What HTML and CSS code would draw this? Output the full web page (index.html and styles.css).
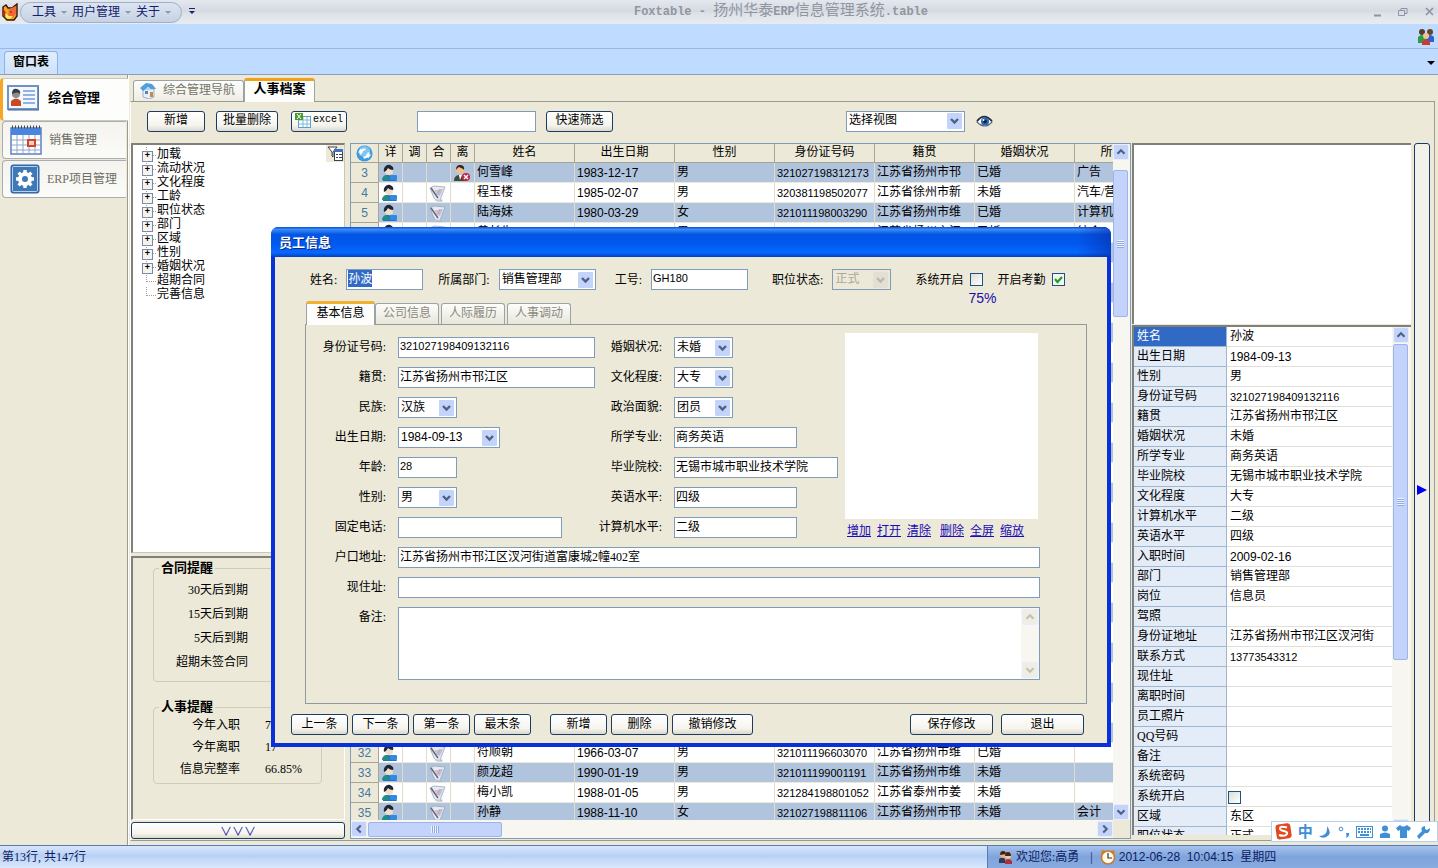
FILE: index.html
```html
<!DOCTYPE html>
<html lang="zh-CN">
<head>
  <meta charset="UTF-8">
  <title>Foxtable - 扬州华泰ERP信息管理系统.table</title>
  <link rel="stylesheet" href="styles.css">
</head>
<body>

  <!-- 图标 -->
  <svg class="defs" width="0" height="0" aria-hidden="true">
    <symbol id="i-person" viewBox="0 0 18 18">
      <path d="M2 17c-1-4 2-6 5-6l6 1 3 5z" fill="#2a6fc4"/>
      <path d="M1 16c0-3 2-5 5-5l3 5z" fill="#1d8f86"/>
      <rect x="9" y="11" width="7" height="5" rx="1" fill="#2f8be0"/>
      <circle cx="8" cy="7" r="4" fill="#f6dcc4"/>
      <path d="M3 8c-1-5 3-8 6-7 3 1 4 3 3 5-2 0-4-1-5-2-1 2-2 3-4 4z" fill="#1c2836"/>
    </symbol>
    <symbol id="i-leave" viewBox="0 0 18 18">
      <path d="M1 17c0-5 3-6 6-6s6 1 6 6z" fill="#3d4a3c"/>
      <path d="M6 11l1 5 2-5z" fill="#fff"/>
      <circle cx="7" cy="6" r="4" fill="#f0bf90"/>
      <path d="M3 6c0-4 2-5 4-5s5 1 4 5c-1-2-4-2-5-3-1 1-2 1-3 3z" fill="#3a2418"/>
      <circle cx="13" cy="13" r="4" fill="#c8203c"/>
      <path d="M11 11l4 4M15 11l-4 4" stroke="#fff" stroke-width="1.4"/>
    </symbol>
    <symbol id="i-contract" viewBox="0 0 18 18">
      <path d="M1 4l4-2 11 1-3 8-2 5 2 1H8l-3-3z" fill="#e6eaf2" stroke="#9aa5ba" stroke-width=".8"/>
      <path d="M10 5l4 0-3 7-3-1z" fill="#b9c2d4"/>
      <path d="M6 7h5M7 9h3" stroke="#d98f96"/>
      <path d="M2 4l7 10" stroke="#5a6478" stroke-width="1.4"/>
      <path d="M6 16h8" stroke="#c2c9d8"/>
    </symbol>
    <symbol id="i-up" viewBox="0 0 16 16"><path d="M4 10l4-4 4 4" fill="none" stroke="currentColor" stroke-width="2.4"/></symbol>
    <symbol id="i-down" viewBox="0 0 16 16"><path d="M4 6l4 4 4-4" fill="none" stroke="currentColor" stroke-width="2.4"/></symbol>
    <symbol id="i-left" viewBox="0 0 16 16"><path d="M10 4L6 8l4 4" fill="none" stroke="currentColor" stroke-width="2.4"/></symbol>
    <symbol id="i-right" viewBox="0 0 16 16"><path d="M6 4l4 4-4 4" fill="none" stroke="currentColor" stroke-width="2.4"/></symbol>
  </svg>

  <!-- 标题栏 -->
  <header class="titlebar">
    <svg class="fox" width="17" height="18" viewBox="0 0 17 18">
      <path d="M2 4l3-2 2 3 4 0 5-4v12l-3 4H6l-4-4z" fill="#f6a81c" stroke="#3a1208" stroke-width="1.4"/>
      <path d="M8 6l7-3v8l-3 4-5-2z" fill="#ee6a3a"/>
      <path d="M2 5l3 5-1 4-2-2z" fill="#b32a10"/>
      <path d="M4 10l4 3 4 0-3 3-4-1z" fill="#ffe95c"/>
      <path d="M9 9l2 0" stroke="#7a1c05"/>
    </svg>
    <nav class="quick">
      <a href="#">工具</a><i></i>
      <a href="#">用户管理</a><i></i>
      <a href="#">关于</a><i></i>
    </nav>
    <span class="more"></span>
    <h1>Foxtable - <b>扬州华泰</b>ERP<b>信息管理系统</b>.table</h1>
    <svg class="win-buttons" width="62" height="12" viewBox="0 0 62 12" fill="none" stroke="#8a94a6">
      <path d="M1 9.500h7" stroke-width="2"/>
      <path d="M25.500 4.500h6v5h-6zM28 4V2.500h6v5h-2"/>
      <path d="M53 2l7 7M60 2l-7 7" stroke-width="1.600"/>
    </svg>
  </header>
  <div class="ribbon">
    <svg width="18" height="17" viewBox="0 0 18 17">
      <circle cx="5" cy="4" r="3" fill="#5a3a22"/><path d="M1 15V9q4-4 8 0v6z" fill="#2f9a44"/>
      <circle cx="13" cy="4" r="3" fill="#6b4426"/><path d="M9 14V9q4-4 8 0v5z" fill="#2f62c8"/>
      <circle cx="9" cy="8" r="3" fill="#eec39a"/><path d="M5 17v-3q4-5 8 0v3z" fill="#cf3a30"/>
    </svg>
  </div>
  <div class="window-tabs">
    <button type="button" class="window-tab">窗口表</button>
    <span class="tab-arrow"></span>
  </div>

  <main>
    <!-- 左侧导航 -->
    <nav class="sidebar">
      <button type="button" class="side-item active">
        <svg width="32" height="26" viewBox="0 0 32 26">
          <rect x="1" y="1" width="30" height="23" fill="#f4f8fd" stroke="#6f93c4" stroke-width="2"/>
          <path d="M1 25h31V2" fill="none" stroke="#3f6298"/>
          <path d="M16 6h12M16 10h12M16 14h12M16 18h12" stroke="#8fb4e2" stroke-width="2"/>
          <path d="M4 21v-5q5-5 10 0v5z" fill="#c94a1c"/>
          <circle cx="9" cy="9" r="4" fill="#8d8d90"/><path d="M5 9q0-6 5-5 4 1 3 5-2-3-8 0z" fill="#3c3c40"/>
        </svg>
        综合管理
      </button>
      <button type="button" class="side-item">
        <svg width="32" height="30" viewBox="0 0 32 30">
          <rect x="1" y="3" width="30" height="26" fill="#fff" stroke="#5c7fc0" stroke-width="1.500"/>
          <rect x="1" y="3" width="30" height="7" fill="#4a86dd"/>
          <path d="M2 2h28" stroke="#444" stroke-dasharray="1 2" stroke-width="3"/>
          <path d="M2 15h28M2 20h28M2 25h28M7 10v18M13 10v18M19 10v18M25 10v18" stroke="#8fa6ce"/>
          <rect x="18" y="15" width="7" height="6" fill="#f8d3c8" stroke="#d6432a" stroke-width="2"/>
        </svg>
        销售管理
      </button>
      <button type="button" class="side-item">
        <svg width="30" height="30" viewBox="0 0 30 30">
          <rect x="1" y="1" width="28" height="28" rx="2" fill="#3d78b8" stroke="#2f5f98"/>
          <rect x="2.500" y="2.500" width="25" height="25" rx="1" fill="none" stroke="#b8d2ee"/>
          <circle cx="15" cy="15" r="5" fill="none" stroke="#fff" stroke-width="4"/>
          <path d="M15 6v4M15 20v4M6 15h4M20 15h4M8.600 8.600l3 3M18.400 18.400l3 3M21.400 8.600l-3 3M8.600 21.400l3-3" stroke="#fff" stroke-width="3.400"/>
        </svg>
        ERP项目管理
      </button>
    </nav>

    <section class="content">
      <div class="page-tabs">
        <button type="button" class="page-tab">
          <svg width="17" height="17" viewBox="0 0 17 17">
            <path d="M3 7h11v8l-5 2-6-2z" fill="#e9eef5" stroke="#9db2cc"/>
            <path d="M0 6l6-5 6 1 4 5-5 0-3-2-5 4z" fill="#4aa0e0"/>
            <rect x="10" y="10" width="3" height="5" fill="#c58a50"/><rect x="5" y="9" width="3" height="3" fill="#4a88d0"/>
          </svg>
          综合管理导航
        </button>
        <button type="button" class="page-tab active">人事档案</button>
      </div>

      <div class="page">
        <!-- 工具栏 -->
        <div class="toolbar">
          <button type="button" class="btn w58">新增</button>
          <button type="button" class="btn w62">批量删除</button>
          <button type="button" class="btn w56">
            <svg width="16" height="15" viewBox="0 0 16 15">
              <rect x="3.500" y="3.500" width="12" height="11" fill="#fff" stroke="#58a0c8"/>
              <path d="M4 7h11M4 11h11M8 4v10M12 4v10" stroke="#7fbad8"/>
              <rect width="8" height="7" fill="#4a9a30"/><path d="M2 1l4 5M6 1L2 6" stroke="#fff"/>
            </svg>
            <span class="mono">excel</span>
          </button>
          <input type="text" class="filter" aria-label="筛选">
          <button type="button" class="btn w67">快速筛选</button>
          <select class="view" aria-label="选择视图"><option>选择视图</option></select>
          <svg class="eye" width="17" height="13" viewBox="0 0 17 13">
            <path d="M1 7q7-10 15 0-7 8-15 0z" fill="#fff" stroke="#5c6c80" stroke-width="1.200"/>
            <circle cx="9" cy="6.500" r="4" fill="#2c62ae"/><circle cx="9" cy="6.500" r="1.800" fill="#0c1c3c"/><circle cx="7.500" cy="5" r="1" fill="#fff"/>
            <path d="M1 6q7-9 15 0" fill="none" stroke="#222c3a" stroke-width="1.600"/>
          </svg>
        </div>

        <div class="work">
          <!-- 筛选树与提醒 -->
          <div class="left-col">
            <div class="tree-box">
              <ul class="tree" id="tree"></ul>
              <svg class="tree-filter" width="18" height="17" viewBox="0 0 18 17">
                <rect width="18" height="17" fill="#ece9d8"/>
                <path d="M2 2h9L7 7v5L6 11V7z" fill="#fff" stroke="#444"/>
                <rect x="8.500" y="4.500" width="8" height="11" fill="#fff" stroke="#345"/><path d="M8 4h9v3H8z" fill="#3a70c8"/>
                <path d="M10 9.500h2M13 9.500h3M10 12.500h2M13 12.500h3" stroke="#345"/>
              </svg>
            </div>
            <div class="notice">
              <fieldset class="contract">
                <legend>合同提醒</legend>
                <p><span>30天后到期</span></p>
                <p><span>15天后到期</span></p>
                <p><span>5天后到期</span></p>
                <p><span>超期未签合同</span></p>
              </fieldset>
              <fieldset class="staff">
                <legend>人事提醒</legend>
                <p><span>今年入职</span><b>77</b></p>
                <p><span>今年离职</span><b>17</b></p>
                <p><span>信息完整率</span><b>66.85%</b></p>
              </fieldset>
            </div>
            <button type="button" class="btn fold">∨∨∨</button>
          </div>

          <!-- 人员列表 -->
          <div class="grid">
            <div class="grid-view">
              <table class="staff-table">
                <colgroup>
                  <col class="c-no"><col class="c-ico"><col class="c-ico"><col class="c-ico"><col class="c-ico">
                  <col><col><col><col><col><col><col>
                </colgroup>
                <thead>
                  <tr>
                    <th class="refresh">
                      <svg width="17" height="17" viewBox="0 0 18 18">
                        <circle cx="9" cy="9" r="8.500" fill="#3f9be0"/><circle cx="9" cy="7" r="6" fill="#7cc4f2"/>
                        <path d="M5 10a4 4 0 0 1 5-5M13 8a4 4 0 0 1-5 5" fill="none" stroke="#fff" stroke-width="2.200"/>
                        <path d="M2 8h6l-3-4zM16 10h-6l3 4z" fill="#fff"/>
                      </svg>
                    </th>
                    <th>详</th><th>调</th><th>合</th><th>离</th>
                    <th>姓名</th><th>出生日期</th><th>性别</th><th>身份证号码</th><th>籍贯</th><th>婚姻状况</th><th>所学专业</th>
                  </tr>
                </thead>
                <tbody id="staffRows"></tbody>
              </table>
            </div>
            <div class="scroll-v">
              <span class="sb-btn"><svg><use href="#i-up"/></svg></span>
              <span class="thumb grid-thumb"></span>
              <span class="sb-btn end"><svg><use href="#i-down"/></svg></span>
            </div>
            <div class="scroll-h">
              <span class="sb-btn"><svg><use href="#i-left"/></svg></span>
              <span class="thumb"></span>
              <span class="sb-btn end"><svg><use href="#i-right"/></svg></span>
            </div>
          </div>

          <!-- 右侧明细 -->
          <div class="right-col">
            <div class="blank"></div>
            <div class="detail">
              <div class="detail-view">
                <table class="detail-table"><tbody id="detailRows"></tbody></table>
              </div>
              <div class="scroll-v">
                <span class="sb-btn"><svg><use href="#i-up"/></svg></span>
                <span class="thumb detail-thumb"></span>
                <span class="sb-btn end"><svg><use href="#i-down"/></svg></span>
              </div>
            </div>
          </div>
          <button type="button" class="strip" aria-label="展开"><i></i></button>
        </div>
      </div>
    </section>
  </main>

  <!-- 状态栏 -->
  <footer class="status">
    <span class="rows">第13行, 共147行</span>
    <div class="user">
      <svg width="14" height="14" viewBox="0 0 14 14">
        <path d="M0 13V9q3-3 6 0v4z" fill="#2d3a58"/><circle cx="4" cy="5" r="3" fill="#e8b084"/><path d="M1 5q0-4 3-4t3 3z" fill="#3c2010"/>
        <path d="M6 14v-3q3-4 7 0v3z" fill="#b03038"/><circle cx="9" cy="6" r="3" fill="#f0c8a0"/><path d="M6 6q0-4 3-4t3 4z" fill="#50200c"/>
      </svg>
      <span>欢迎您:高勇</span>
      <span class="sep">|</span>
      <svg width="16" height="16" viewBox="0 0 16 16">
        <circle cx="3" cy="3" r="2" fill="#d8862c"/><circle cx="13" cy="3" r="2" fill="#d8862c"/>
        <circle cx="8" cy="8.500" r="6.500" fill="#fffbe8" stroke="#c87a28" stroke-width="1.600"/>
        <path d="M8 4v5h4" fill="none" stroke="#333" stroke-width="1.200"/>
      </svg>
      <span class="date">2012-06-28 &nbsp;10:04:15 &nbsp;星期四</span>
    </div>
  </footer>

  <!-- 员工信息窗口 -->
  <div class="dialog" role="dialog" aria-labelledby="dlgTitle">
    <h2 id="dlgTitle">员工信息</h2>
    <form>
      <div class="head-row">
        <label for="name">姓名:</label>
        <input type="text" id="name" class="name" value="孙波">
        <label for="dept">所属部门:</label>
        <select id="dept" class="dept"><option>销售管理部</option></select>
        <label for="no">工号:</label>
        <input type="text" id="no" class="num no" value="GH180">
        <label for="state">职位状态:</label>
        <select id="state" class="w59" disabled><option>正式</option></select>
        <div class="checks">
          <label for="sysOn">系统开启</label><input type="checkbox" id="sysOn">
          <label for="attOn">开启考勤</label><input type="checkbox" id="attOn" checked>
          <span class="percent">75%</span>
        </div>
      </div>

      <div class="form-tabs">
        <button type="button" class="form-tab active">基本信息</button>
        <button type="button" class="form-tab">公司信息</button>
        <button type="button" class="form-tab">人际履历</button>
        <button type="button" class="form-tab">人事调动</button>
      </div>

      <div class="fields">
        <label for="f1">身份证号码:</label><input type="text" id="f1" class="num w197" value="321027198409132116">
        <label for="f2">婚姻状况:</label><select id="f2" class="w59"><option>未婚</option></select>
        <div class="photo-box">
          <div class="photo"></div>
          <div class="photo-links">
            <a href="#">增加</a><a href="#">打开</a><a href="#">清除</a>
            <a href="#" class="del">删除</a><a href="#">全屏</a><a href="#">缩放</a>
          </div>
        </div>
        <label for="f3">籍贯:</label><input type="text" id="f3" class="w197" value="江苏省扬州市邗江区">
        <label for="f4">文化程度:</label><select id="f4" class="w59"><option>大专</option></select>
        <label for="f5">民族:</label><select id="f5" class="w59"><option>汉族</option></select>
        <label for="f6">政治面貌:</label><select id="f6" class="w59"><option>团员</option></select>
        <label for="f7">出生日期:</label><select id="f7" class="date w102"><option>1984-09-13</option></select>
        <label for="f8">所学专业:</label><input type="text" id="f8" class="w123" value="商务英语">
        <label for="f9">年龄:</label><input type="text" id="f9" class="num w59" value="28">
        <label for="f10">毕业院校:</label><input type="text" id="f10" class="w164" value="无锡市城市职业技术学院">
        <label for="f11">性别:</label><select id="f11" class="w59"><option>男</option></select>
        <label for="f12">英语水平:</label><input type="text" id="f12" class="w123" value="四级">
        <label for="f13">固定电话:</label><input type="text" id="f13" class="w164">
        <label for="f14">计算机水平:</label><input type="text" id="f14" class="w123" value="二级">
        <label for="f15">户口地址:</label><input type="text" id="f15" class="wide" value="江苏省扬州市邗江区汊河街道富康城2幢402室">
        <label for="f16">现住址:</label><input type="text" id="f16" class="wide">
        <label for="f17">备注:</label>
        <div class="memo wide">
          <textarea id="f17"></textarea>
          <div class="scroll-v off">
            <span class="sb-btn"><svg><use href="#i-up"/></svg></span>
            <span class="sb-btn end"><svg><use href="#i-down"/></svg></span>
          </div>
        </div>
      </div>

      <div class="actions">
        <button type="button" class="btn w57">上一条</button>
        <button type="button" class="btn w57">下一条</button>
        <button type="button" class="btn w57">第一条</button>
        <button type="button" class="btn w57">最末条</button>
        <button type="button" class="btn w57 split">新增</button>
        <button type="button" class="btn w57">删除</button>
        <button type="button" class="btn w81">撤销修改</button>
        <button type="button" class="btn w83 push">保存修改</button>
        <button type="button" class="btn w83">退出</button>
      </div>
    </form>
  </div>

  <!-- 输入法工具条 -->
  <div class="ime">
    <svg width="17" height="17" viewBox="0 0 17 17">
      <rect x="1" y="1" width="15" height="15" rx="3" fill="#e04a20" transform="rotate(-8 8 8)"/>
      <path d="M12 4.500q-7-2-7 1 0 2 4 2.500 4 1 3 3-2 3-8 1" fill="none" stroke="#fff" stroke-width="2"/>
    </svg>
    <span>中</span>
    <svg width="14" height="14" viewBox="0 0 14 14"><path d="M9 1q6 8-1 11-4 2-7-1 9 0 8-10z"/></svg>
    <svg width="12" height="14" viewBox="0 0 12 14"><circle cx="3" cy="4" r="1.800" fill="none" stroke="#3f8fd6"/><path d="M8 8h3q1 3-3 5 1-2 0-5z"/></svg>
    <svg width="17" height="12" viewBox="0 0 17 12"><rect x=".5" y=".5" width="16" height="11" fill="none" stroke="#3f8fd6"/><path d="M2 3h13M2 6h13" stroke="#3f8fd6" stroke-width="2" stroke-dasharray="2 1"/><path d="M4 9h9" stroke="#3f8fd6" stroke-width="2"/></svg>
    <svg width="12" height="14" viewBox="0 0 12 14"><circle cx="6" cy="3.500" r="3"/><path d="M1 13V9q5-3 10 0v4z"/></svg>
    <svg width="15" height="13" viewBox="0 0 15 13"><path d="M4 0q3 3 7 0l4 3-2 3-2-1v8H4V5L2 6 0 3z"/></svg>
    <svg width="14" height="14" viewBox="0 0 14 14"><path d="M13 3l-3 2-2-1V1q-5 1-3 5l-5 5 2 3 6-6q5 1 5-5z"/></svg>
  </div>

  <script>
    // 树节点,最后两个没有子节点
    const nodes = ['加载', '流动状况', '文化程度', '工龄', '职位状态', '部门', '区域', '性别', '婚姻状况', '超期合同', '完善信息'];
    document.getElementById('tree').innerHTML = nodes.map((n, i) =>
      `<li class="${i < 9 ? 'has-child' : ''}">${n}</li>`).join('');

    // 行号: [姓名, 出生日期, 性别, 身份证号码, 籍贯, 婚姻状况, 所学专业]
    const staff = {
      3: ['何雪峰', '1983-12-17', '男', '321027198312173', '江苏省扬州市邗', '已婚', '广告'],
      4: ['程玉楼', '1985-02-07', '男', '320381198502077', '江苏省徐州市新', '未婚', '汽车/营销'],
      5: ['陆海妹', '1980-03-29', '女', '321011198003290', '江苏省扬州市维', '已婚', '计算机'],
      6: ['黄长生', '', '男', '', '江苏省扬州市江', '已婚', '纺合'],
      32: ['符顺朝', '1966-03-07', '男', '321011196603070', '江苏省扬州市维', '已婚', ''],
      33: ['颜龙超', '1990-01-19', '男', '321011199001191', '江苏省扬州市维', '未婚', ''],
      34: ['梅小凯', '1988-01-05', '男', '321284198801052', '江苏省泰州市姜', '未婚', ''],
      35: ['孙静', '1988-11-10', '女', '321027198811106', '江苏省扬州市邗', '未婚', '会计']
    };
    const icon = id => `<svg width="18" height="18"><use href="#${id}"/></svg>`;

    let html = '';
    for (let no = 3; no <= 35; no++) {
      const r = staff[no] || ['', '', '', '', '', '', ''];
      html += `<tr>
        <th>${staff[no] ? no : ''}</th>
        <td class="ico">${icon('i-person')}</td>
        <td></td>
        <td class="ico">${no > 3 ? icon('i-contract') : ''}</td>
        <td class="ico">${no === 3 ? icon('i-leave') : ''}</td>
        <td>${r[0]}</td><td class="date">${r[1]}</td><td>${r[2]}</td><td class="num">${r[3]}</td>
        <td>${r[4]}</td><td>${r[5]}</td><td>${r[6]}</td>
      </tr>`;
    }
    document.getElementById('staffRows').innerHTML = html;

    // 明细: [字段, 值, 样式]
    const detail = [
      ['姓名', '孙波'], ['出生日期', '1984-09-13', 'date'], ['性别', '男'],
      ['身份证号码', '321027198409132116', 'num'], ['籍贯', '江苏省扬州市邗江区'],
      ['婚姻状况', '未婚'], ['所学专业', '商务英语'], ['毕业院校', '无锡市城市职业技术学院'],
      ['文化程度', '大专'], ['计算机水平', '二级'], ['英语水平', '四级'],
      ['入职时间', '2009-02-16', 'date'], ['部门', '销售管理部'], ['岗位', '信息员'],
      ['驾照', ''], ['身份证地址', '江苏省扬州市邗江区汊河街'], ['联系方式', '13773543312', 'num'],
      ['现住址', ''], ['离职时间', ''], ['员工照片', ''], ['QQ号码', ''], ['备注', ''],
      ['系统密码', ''], ['系统开启', '<input type="checkbox" aria-label="系统开启">'],
      ['区域', '东区'], ['职位状态', '正式']
    ];
    document.getElementById('detailRows').innerHTML = detail.map(d =>
      `<tr><th>${d[0]}</th><td class="${d[2] || ''}">${d[1]}</td></tr>`).join('');

    // 打开窗口时选中姓名
    document.getElementById('name').select();
  </script>
</body>
</html>
```
FILE: styles.css
```css
/* 全局 */
* {
  box-sizing: border-box;
}

body {
  margin: 0;
  height: 100vh;
  display: flex;
  flex-direction: column;
  position: relative;
  overflow: hidden;
  background: #ece9d8;
  color: #000;
  font: 12px/14px "Liberation Serif", "Noto Sans CJK SC", serif;
}

button, input, select, textarea {
  font: inherit;
  color: inherit;
  margin: 0;
}

h1, h2, p, ul, fieldset {
  margin: 0;
  padding: 0;
}

svg {
  display: block;
  flex: none;
}

.defs {
  position: absolute;
}

/* 标题栏 */
.titlebar {
  flex: none;
  height: 24px;
  display: flex;
  align-items: center;
  position: relative;
  background: linear-gradient(#e4e8ee, #d5dae2 45%, #dfe3e8 60%, #e9ecee);
}

.fox {
  margin: 0 2px 0 1px;
}

.quick {
  display: flex;
  align-items: center;
  width: 162px;
  height: 21px;
  padding-left: 11px;
  border: 1px solid #9db0cc;
  border-radius: 11px;
  background: linear-gradient(#dce4f0, #c6d2e4);
}

.quick a {
  color: #15216b;
  text-decoration: none;
}

.quick i, .more, .tab-arrow {
  border: 3px solid transparent;
  border-top-color: #8a98b4;
  border-bottom: 0;
}

.quick i {
  margin: 0 5px;
}

.more {
  position: relative;
  margin-left: 7px;
  border-top-color: #15216b;
}

.more::before {
  content: "";
  position: absolute;
  left: -3px;
  top: -6px;
  width: 6px;
  height: 1px;
  background: #15216b;
}

.titlebar h1 {
  position: absolute;
  left: 0;
  right: 0;
  text-align: center;
  padding-left: 124px;
  color: #9095a0;
  font: bold 12px/22px "Liberation Mono", "Noto Sans CJK SC", monospace;
}

.titlebar h1 b {
  font-size: 15px;
  font-weight: normal;
}

.win-buttons {
  margin-left: auto;
  margin-right: 3px;
}

.ribbon {
  flex: none;
  height: 25px;
  display: flex;
  align-items: center;
  justify-content: flex-end;
  padding-right: 3px;
  background: #bfdbff;
  border-bottom: 1px solid #9bb9e0;
}

.window-tabs {
  flex: none;
  height: 26px;
  display: flex;
  align-items: flex-end;
  justify-content: space-between;
  padding: 0 3px 0 4px;
  background: #bfdbff;
  border-bottom: 1px solid #8a9fc0;
}

.window-tab {
  width: 54px;
  height: 23px;
  padding: 0 0 3px;
  border: 1px solid #8db2e3;
  border-bottom: 0;
  border-radius: 4px 4px 0 0;
  background: linear-gradient(#e2eefc, #cfe1f8);
  font-weight: bold;
}

.tab-arrow {
  border-width: 4px 4px 0;
  margin-bottom: 9px;
  border-top-color: #000;
}

/* 主体 */
main {
  flex: 1;
  min-height: 0;
  display: flex;
}

.sidebar {
  flex: none;
  width: 128px;
  padding-top: 3px;
  border-right: 1px solid #9c9a8c;
}

.side-item {
  display: flex;
  align-items: center;
  gap: 7px;
  width: 124px;
  height: 38px;
  margin: 0 0 1px 2px;
  padding: 0 0 0 7px;
  border: 1px solid #a8aeb4;
  border-right: 0;
  border-radius: 4px 0 0 4px;
  background: linear-gradient(#f4f3ee, #fbfbf8);
  color: #6e6e66;
}

.side-item.active {
  gap: 9px;
  width: 128px;
  height: 43px;
  margin: 0;
  padding: 0 0 3px 4px;
  border-color: #c8c8c0;
  border-left: 3px solid #f5a623;
  background: #fdfdfc;
  color: #000;
  font-weight: bold;
  font-size: 13px;
}

.content {
  flex: 1;
  min-width: 0;
  display: flex;
  flex-direction: column;
  padding: 3px 3px 4px 1px;
  border-left: 1px solid #fff;
}

.page-tabs {
  flex: none;
  height: 23px;
  display: flex;
  align-items: flex-end;
  padding-left: 3px;
}

.page-tab {
  display: flex;
  align-items: center;
  gap: 6px;
  width: 111px;
  height: 21px;
  padding: 0 0 2px 6px;
  border: 1px solid #9aa4a8;
  border-bottom: 0;
  border-radius: 3px 3px 0 0;
  background: linear-gradient(#fdfdfb, #efede2);
  color: #75756c;
}

.page-tab.active {
  justify-content: center;
  width: 71px;
  height: 24px;
  margin-bottom: -1px;
  padding: 0 0 5px;
  border-top: 3px solid #f0a020;
  background: #fdfdfb;
  color: #000;
  font-weight: bold;
  font-size: 13px;
  z-index: 1;
}

.page {
  flex: 1;
  min-height: 0;
  display: flex;
  flex-direction: column;
  padding: 0 4px 1px 0;
  border: 1px solid #9a9c90;
  border-left-color: #fff;
}

.toolbar {
  flex: none;
  height: 41px;
  display: flex;
  align-items: center;
  padding: 0 0 3px 16px;
}

/* 按钮 */
.btn {
  display: flex;
  align-items: center;
  justify-content: center;
  gap: 2px;
  height: 21px;
  padding: 0 0 2px;
  border: 1px solid #1c3c66;
  border-radius: 3px;
  background: linear-gradient(#fff, #f5f4ee 70%, #dcd9cc);
}

.toolbar .w58 { margin-right: 11px; }
.toolbar .w62 { margin-right: 13px; }
.toolbar .w56 { margin-right: 70px; }
.w56 { width: 56px; }
.w57 { width: 57px; }
.w58 { width: 58px; }
.w62 { width: 62px; }
.w67 { width: 67px; }
.w81 { width: 81px; }
.w83 { width: 83px; }

.mono {
  font: 10px/14px "Liberation Mono", monospace;
}

/* 输入框 */
input[type="text"], select, textarea {
  height: 21px;
  padding: 0 0 2px 2px;
  border: 1px solid #7f9db9;
  border-radius: 0;
  background: #fff;
  outline: none;
}

input[type="text"] {
  padding: 0 0 4px 1px;
}

select {
  appearance: none;
  background: #fff url("data:image/svg+xml,%3Csvg xmlns='http://www.w3.org/2000/svg' width='15' height='16'%3E%3Crect width='15' height='16' rx='1' fill='%23c3d3fa'/%3E%3Cpath d='M4 6l3.500 3.500L11 6' fill='none' stroke='%234d6185' stroke-width='2.400'/%3E%3C/svg%3E") no-repeat right 2px center;
}

select:disabled {
  opacity: 1;
  color: #aca899;
  background: #ece9d8 url("data:image/svg+xml,%3Csvg xmlns='http://www.w3.org/2000/svg' width='15' height='16'%3E%3Crect width='15' height='16' rx='1' fill='%23e2e0d4'/%3E%3Cpath d='M4 6l3.500 3.500L11 6' fill='none' stroke='%23bdb9a8' stroke-width='2.400'/%3E%3C/svg%3E") no-repeat right 2px center;
}

input[type="checkbox"] {
  appearance: none;
  width: 13px;
  height: 13px;
  border: 1px solid #1c5180;
  background: linear-gradient(135deg, #dcdcd7, #fff);
}

input[type="checkbox"]:checked {
  background: url("data:image/svg+xml,%3Csvg xmlns='http://www.w3.org/2000/svg' width='11' height='11'%3E%3Cpath d='M2 5l2.500 3L9 3' fill='none' stroke='%2321a121' stroke-width='2.200'/%3E%3C/svg%3E") #f6f6f2;
}

.num, input[type="text"].num {
  font-family: "Liberation Sans", sans-serif;
  font-size: 11px;
}

.date {
  font-family: "Liberation Sans", "Noto Sans CJK SC", sans-serif;
}

.filter {
  width: 119px;
  margin-right: 10px;
}

.view {
  width: 119px;
  margin-left: 233px;
}

.eye {
  margin-left: 11px;
}

/* 工作区 */
.work {
  flex: 1;
  min-height: 0;
  display: flex;
}

.left-col {
  flex: none;
  width: 214px;
  margin-right: 5px;
  display: flex;
  flex-direction: column;
}

.tree-box {
  flex: 1;
  position: relative;
  padding: 2px 0 0 9px;
  border: 2px solid #808078;
  border-right: 1px solid #c8c6b8;
  border-bottom: 1px solid #c8c6b8;
  background: #fff;
}

.tree {
  list-style: none;
}

.tree li {
  position: relative;
  height: 14px;
  padding-left: 15px;
}

/* 树的虚线 */
.tree li::before {
  content: "";
  position: absolute;
  left: 4px;
  top: 0;
  width: 9px;
  height: 8px;
  border: dotted #a0a0a0;
  border-width: 0 0 1px 1px;
}

.tree li.has-child::after {
  content: "+";
  position: absolute;
  left: 0;
  top: 4px;
  width: 9px;
  height: 9px;
  border: 1px solid #7b8ba5;
  background: #f4f3ee;
  font: bold 9px/7px "Liberation Sans", sans-serif;
  text-align: center;
}

.tree-filter {
  position: absolute;
  top: 0;
  right: 0;
}

.notice {
  height: 264px;
  margin: 3px 0 2px;
  padding: 3px 22px 0 20px;
  border: 2px solid #808078;
  border-right: 1px solid #fff;
  border-bottom: 1px solid #fff;
}

.notice fieldset {
  border: 1px solid #cfccba;
  border-radius: 4px;
}

.notice legend {
  margin-left: 5px;
  padding: 0 2px;
  font-weight: bold;
  font-size: 13px;
}

.notice p {
  display: flex;
}

.notice p b {
  margin-left: 25px;
  font-weight: normal;
}

.contract {
  height: 121px;
  margin-bottom: 18px;
}

.contract p {
  height: 24px;
  padding-top: 8px;
}

.contract p span {
  width: 94px;
  text-align: right;
}

.staff {
  height: 84px;
}

.staff p {
  height: 22px;
  padding-top: 4px;
}

.staff p span {
  width: 86px;
  text-align: right;
}

.fold {
  height: 17px;
  padding: 0;
  color: #15159c;
  font-family: "Noto Sans CJK SC", sans-serif;
}

/* 列表 */
.grid {
  flex: 1;
  min-width: 0;
  display: grid;
  grid-template: minmax(0, 1fr) 18px / minmax(0, 1fr) 17px;
  margin-right: 1px;
  border: 1px solid #7f9db9;
  background: #ece9d8;
}

.grid-view {
  overflow: hidden;
}

.staff-table {
  width: 824px;
  table-layout: fixed;
  border-spacing: 0;
  background: #fff;
}

.c-no { width: 28px; }
.c-ico { width: 24px; }

.staff-table th, .staff-table td {
  height: 20px;
  padding: 0 0 2px 2px;
  white-space: nowrap;
  overflow: hidden;
}

.staff-table th {
  padding: 0 0 2px;
  border-right: 1px solid #a7a594;
  border-bottom: 1px solid #a7a594;
  background: #ece9d8;
  font-weight: normal;
}

.staff-table thead th {
  height: 19px;
}

.staff-table thead .refresh {
  padding: 0;
}

.staff-table tbody th {
  color: #44789c;
  font-family: "Liberation Sans", sans-serif;
  padding: 0;
}

.staff-table td {
  border-right: 1px solid #e0ddcc;
  border-bottom: 1px solid #ece9d8;
}

.staff-table thead svg {
  margin: 0 auto;
}

.staff-table .date, .staff-table .num {
  padding: 1px 0 0 2px;
}

.staff-table tbody tr:nth-child(odd) td {
  background: #b0c4de;
}

.staff-table td.ico {
  padding: 1px 0 0 2px;
}

/* 滚动条 */
.scroll-v, .scroll-h {
  display: flex;
  background: #f7f6f1;
}

.scroll-v {
  flex-direction: column;
  width: 17px;
}

.scroll-h {
  align-items: center;
}

.sb-btn {
  flex: none;
  width: 16px;
  height: 16px;
  border: 1px solid #e8eefc;
  border-radius: 2px;
  background: #c3d3fa;
  color: #4d6185;
}

.sb-btn svg {
  width: 14px;
  height: 14px;
}

.sb-btn.end {
  margin-top: auto;
}

.scroll-h .sb-btn.end {
  margin: 0 0 0 auto;
}

.thumb {
  width: 15px;
  border: 1px solid #9cb4e8;
  border-radius: 2px;
  background: repeating-linear-gradient(#eef3ff 0 1px, #8ea9e4 1px 2px) center / 7px 8px no-repeat, #c3d3fb;
}

.grid-thumb {
  height: 147px;
  margin-top: 10px;
}

.detail-thumb {
  height: 316px;
  margin-top: 1px;
}

.scroll-h .thumb {
  width: 134px;
  height: 15px;
  margin-left: 1px;
  background: repeating-linear-gradient(90deg, #eef3ff 0 1px, #8ea9e4 1px 2px) center / 8px 7px no-repeat, #c3d3fb;
}

.off .sb-btn {
  background: #efede4;
  color: #c4c1b2;
}

/* 明细 */
.right-col {
  flex: none;
  width: 279px;
  margin-right: 3px;
  display: flex;
  flex-direction: column;
}

.blank {
  height: 181px;
  margin-bottom: 1px;
  border: 2px solid #808078;
  border-width: 2px 0 0 2px;
  background: #fff;
}

.detail {
  flex: 1;
  min-height: 0;
  display: flex;
  margin-bottom: 4px;
  border: 2px solid #808078;
  border-width: 2px 0 0 2px;
  background: #fff;
}

.detail-view {
  flex: 1;
  overflow: hidden;
}

.detail-table {
  width: 100%;
  table-layout: fixed;
  border-spacing: 0;
}

.detail-table th, .detail-table td {
  height: 20px;
  padding: 0 0 2px 3px;
  border-bottom: 1px solid #e2e0d6;
  white-space: nowrap;
  overflow: hidden;
}

.detail-table td.num, .detail-table td.date {
  padding-top: 1px;
  padding-bottom: 0;
}

.detail-table th {
  width: 93px;
  border-right: 1px solid #9fb6cf;
  border-bottom-color: #9fb6cf;
  background: #e4ecf7;
  font-weight: normal;
  text-align: left;
}

.detail-table tr:first-child th {
  background: #316ac5;
  color: #fff;
}

.detail-table td input {
  display: block;
  margin: 3px 0 0 -2px;
}

.detail .scroll-v {
  width: 19px;
  padding-left: 1px;
}

.strip {
  width: 16px;
  margin-bottom: 3px;
  padding: 0;
  border: 1px solid #1c3c66;
  border-radius: 3px;
  background: #f2f1ea;
}

.strip i {
  display: block;
  margin-left: 2px;
  width: 0;
  border: 5px solid transparent;
  border-left: 10px solid #0000f0;
  border-right: 0;
}

/* 状态栏 */
.status {
  flex: none;
  height: 23px;
  display: flex;
  align-items: center;
  border-top: 1px solid #567db0;
  background: linear-gradient(#d8e6fb, #b9d0f4 45%, #c4d9f8 60%, #d8e8fd);
  color: #0c1c62;
}

.rows {
  flex: 1;
  padding-left: 2px;
}

.user {
  display: flex;
  align-items: center;
  gap: 3px;
  width: 451px;
  height: 22px;
  padding-left: 11px;
  border-left: 1px solid #567db0;
  background: linear-gradient(#a6c2ee, #7fa4dc 50%, #88abe0);
}

.user .sep {
  margin: 0 4px 0 8px;
}

/* 员工信息窗口 */
.dialog {
  position: absolute;
  left: 271px;
  top: 227px;
  width: 840px;
  border: 4px solid #0831d9;
  border-top: 0;
  border-radius: 8px 8px 0 0;
  background: #ece9d8;
}

.dialog h2 {
  height: 30px;
  margin: 0 -4px;
  padding-left: 8px;
  border-radius: 7px 7px 0 0;
  background: linear-gradient(90deg, transparent 96%, #0831b0a0), linear-gradient(#0a4fd0, #3a8cf8 8%, #0455e4 25%, #0058ee 55%, #0668ff 85%, #0340c0);
  color: #fff;
  font: bold 13px/32px "Liberation Sans", "Noto Sans CJK SC", sans-serif;
  text-shadow: 1px 1px #0a2a80;
}

.dialog form {
  padding: 12px 20px 8px 16px;
}

.head-row {
  display: flex;
  align-items: center;
  height: 21px;
  padding-left: 19px;
}

.head-row label {
  margin-right: 9px;
  white-space: nowrap;
}

.head-row .name {
  width: 77px;
  margin-right: 15px;
}

.head-row .dept {
  width: 97px;
  margin-right: 19px;
}

.head-row .no {
  width: 97px;
  margin-right: 24px;
}

.checks {
  display: flex;
  align-items: center;
  position: relative;
  margin-left: 24px;
}

.checks label {
  margin-right: 7px;
}

.checks input {
  margin-right: 14px;
}

.percent {
  position: absolute;
  left: 53px;
  top: 17px;
  color: #1a0ca8;
  font: 14px/16px "Liberation Sans", sans-serif;
}

::selection {
  background: #316ac5;
  color: #fff;
}

.form-tabs {
  display: flex;
  align-items: flex-end;
  height: 34px;
  padding-left: 15px;
}

.form-tab {
  width: 64px;
  height: 21px;
  margin-right: 2px;
  padding: 0 0 2px;
  border: 1px solid #9aa4a8;
  border-bottom: 0;
  border-radius: 3px 3px 0 0;
  background: linear-gradient(#fdfdfb, #e8e6da);
  color: #8a897e;
}

.form-tab.active {
  width: 69px;
  height: 24px;
  margin: 0 0 -1px;
  padding-bottom: 4px;
  border-top: 3px solid #f0b030;
  background: #fdfdfb;
  color: #000;
  z-index: 1;
}

.fields {
  display: grid;
  grid-template-columns: 92px 200px 76px 171px 195px;
  grid-auto-rows: 30px;
  margin-left: 14px;
  height: 380px;
  padding-top: 12px;
  border: 1px solid #919b9c;
}

.fields label {
  padding: 3px 12px 0 0;
  text-align: right;
}

.w59 { width: 59px; }
.w102 { width: 102px; }
.w123 { width: 123px; }
.w164 { width: 164px; }
.w197 { width: 197px; }

.wide {
  grid-column: 2 / 6;
}

.photo-box {
  grid-column: 5;
  grid-row: 1 / 8;
  margin-top: -4px;
}

.photo {
  width: 193px;
  height: 186px;
  background: #fff;
}

.photo-links {
  display: flex;
  gap: 6px;
  margin: 5px 0 0 2px;
}

.photo-links a {
  color: #1a0cb8;
}

.photo-links .del {
  margin-left: 3px;
}

.memo {
  display: flex;
  height: 73px;
  border: 1px solid #7f9db9;
  background: #fff;
}

.memo textarea {
  flex: 1;
  height: auto;
  border: 0;
  resize: none;
}

.memo .scroll-v {
  width: 18px;
  padding: 1px;
}

.actions {
  display: flex;
  gap: 4px;
  margin-top: 10px;
  padding-right: 3px;
}

.actions .split {
  margin-left: 15px;
}

.actions .push {
  margin-left: auto;
}

.actions .push + .btn {
  margin-left: 4px;
}

/* 输入法工具条 */
.ime {
  position: absolute;
  right: 0;
  bottom: 26px;
  display: flex;
  align-items: center;
  justify-content: space-between;
  width: 167px;
  height: 21px;
  padding: 0 6px 0 3px;
  border: 1px solid #b8d0e8;
  background: #fff;
  color: #3f8fd6;
  fill: #3f8fd6;
  font-size: 15px;
  font-weight: bold;
}
```
